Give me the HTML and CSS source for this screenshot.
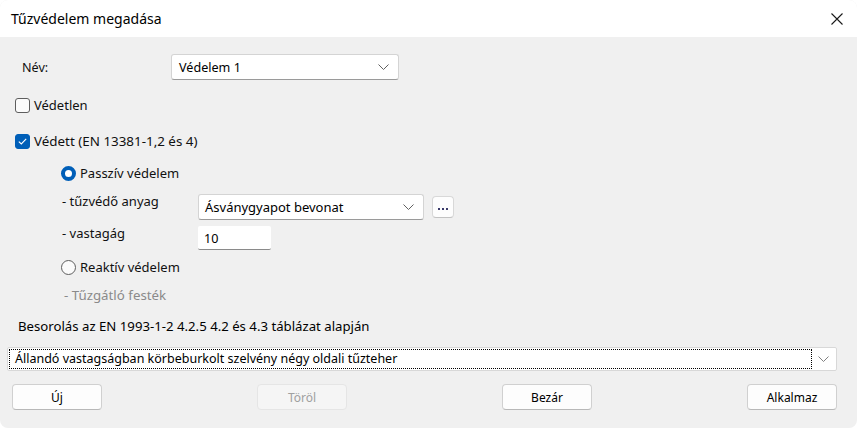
FILE: index.html
```html
<!DOCTYPE html>
<html lang="hu">
<head>
<meta charset="utf-8">
<title>Tűzvédelem megadása</title>
<link rel="stylesheet" href="styles.css">
</head>
<body>
<div class="window">
  <div class="titlebar">
    <span class="title">Tűzvédelem megadása</span>
    <svg class="close" width="12" height="12" viewBox="0 0 12 12"><path d="M0.5 0.5 L11.5 11.5 M11.5 0.5 L0.5 11.5" stroke="#1a1a1a" stroke-width="1.1" fill="none"/></svg>
  </div>
  <div class="content">
    <div class="name-row">
      <span class="name-label">Név:</span>
      <div class="combo combo-name"><span>Védelem 1</span>
        <svg class="chev" width="11" height="6" viewBox="0 0 11 6"><path d="M0.5 0.5 L5.5 5.5 L10.5 0.5" stroke="#606060" stroke-width="1" fill="none"/></svg>
      </div>
    </div>
    <div class="check-row r-unprot">
      <span class="box"></span><span>Védetlen</span>
    </div>
    <div class="check-row r-prot">
      <span class="box checked"><svg width="9" height="7" viewBox="0 0 9 7"><path d="M0.8 3.6 L3.3 6 L8.2 0.8" stroke="#fff" stroke-width="1.1" fill="none"/></svg></span><span class="prot-text">Védett (EN 13381-1,2 és 4)</span>
    </div>
    <div class="sub">
      <div class="radio-row r-pass">
        <span class="radio on"></span><span>Passzív védelem</span>
      </div>
      <div class="field-row r-mat">
        <span class="field-label">- tűzvédő anyag</span>
        <div class="combo combo-mat"><span>Ásványgyapot bevonat</span>
          <svg class="chev" width="11" height="6" viewBox="0 0 11 6"><path d="M0.5 0.5 L5.5 5.5 L10.5 0.5" stroke="#606060" stroke-width="1" fill="none"/></svg>
        </div>
        <div class="dots-btn"><span class="dot"></span><span class="dot"></span><span class="dot"></span></div>
      </div>
      <div class="field-row r-thick">
        <span class="field-label">- vastagág</span>
        <div class="input">10</div>
      </div>
      <div class="radio-row r-react">
        <span class="radio"></span><span>Reaktív védelem</span>
      </div>
      <div class="disabled-label">- Tűzgátló festék</div>
    </div>
    <div class="besorolas">Besorolás az EN 1993-1-2 4.2.5 4.2 és 4.3 táblázat alapján</div>
    <div class="combo combo-wide">
      <span class="focus-text">Állandó vastagságban körbeburkolt szelvény négy oldali tűzteher</span>
      <svg class="chev" width="11" height="6" viewBox="0 0 11 6"><path d="M0.5 0.5 L5.5 5.5 L10.5 0.5" stroke="#808080" stroke-width="1" fill="none"/></svg>
    </div>
    <div class="buttons">
      <div class="btn">Új</div>
      <div class="btn disabled">Töröl</div>
      <div class="btn">Bezár</div>
      <div class="btn">Alkalmaz</div>
    </div>
  </div>
</div>
</body>
</html>
```
FILE: styles.css
```css
* { box-sizing: border-box; }
html, body { margin: 0; padding: 0; background: #ffffff; }
body {
  font-family: "Noto Sans", "Open Sans", sans-serif;
  font-size: 13px;
  color: #111;
  width: 857px;
  height: 428px;
  overflow: hidden;
}
.window {
  width: 857px;
  height: 428px;
  background: #f0f0f0;
  border-radius: 8px;
  overflow: hidden;
  display: flex;
  flex-direction: column;
}
.titlebar {
  height: 37px;
  background: #ffffff;
  display: flex;
  align-items: center;
  padding-left: 11px;
  padding-right: 14px;
  justify-content: space-between;
}
.title { font-size: 14px; color: #000; }
.close { display: block; }
.content {
  padding: 17px 20px 0 7px;
  display: flex;
  flex-direction: column;
}
.name-row {
  display: flex;
  align-items: center;
  height: 26px;
  padding-left: 15px;
  font-size: 12.6px;
}
.name-label { width: 149px; }
.combo {
  background: #fff;
  border: 1px solid #d4d4d4;
  border-bottom-color: #9a9a9a;
  border-radius: 3px;
  display: flex;
  align-items: center;
  justify-content: space-between;
  padding: 0 9px 0 7px;
  color: #000;
}
.combo-name { width: 228px; height: 26px; }
.chev { display: block; flex: none; }
.check-row, .radio-row {
  display: flex;
  align-items: center;
  height: 20px;
  gap: 4px;
}
.check-row { padding-left: 8px; }
.r-unprot { margin-top: 15px; }
.r-prot { margin-top: 16px; }
.prot-text { font-size: 13.4px; }
.box {
  width: 15px;
  height: 15px;
  border: 1px solid #5e5e5e;
  border-radius: 3px;
  background: #fbfbfb;
  display: flex;
  align-items: center;
  justify-content: center;
}
.box.checked { background: #005fb8; border-color: #005fb8; }
.box svg { display: block; }
.sub {
  padding-left: 54px;
  display: flex;
  flex-direction: column;
}
.r-pass { margin-top: 12px; }
.radio {
  width: 15px;
  height: 15px;
  border-radius: 50%;
  border: 1px solid #5e5e5e;
  background: #fbfbfb;
}
.radio.on {
  border: 4px solid #005fb8;
  background: #fff;
}
.field-row {
  display: flex;
  align-items: flex-start;
  padding-left: 1px;
}
.field-label { width: 136px; line-height: 14px; }
.r-mat { margin-top: 11px; }
.combo-mat { width: 226px; height: 26px; padding-left: 6px; }
.dots-btn {
  margin-left: 8px;
  margin-top: 2px;
  width: 22px;
  height: 22px;
  background: #fdfdfd;
  border: 1px solid #d8d8d8;
  border-bottom-color: #c2c2c2;
  border-radius: 4px;
  display: flex;
  align-items: flex-end;
  justify-content: center;
  gap: 2px;
  padding-bottom: 7px;
}
.dot { width: 2px; height: 2px; background: #3a3a6a; }
.r-thick { margin-top: 6px; }
.input {
  width: 73px;
  height: 24px;
  background: #fff;
  border-bottom: 1px solid #8a8a8a;
  border-radius: 2px;
  padding: 4px 0 0 6px;
  color: #000;
  font-size: 12.6px;
}
.r-react { margin-top: 7px; }
.disabled-label {
  margin-top: 8px;
  height: 20px;
  line-height: 20px;
  padding-left: 3px;
  color: #8a8a8a;
  font-size: 13.3px;
}
.besorolas {
  margin-top: 11px;
  height: 20px;
  line-height: 20px;
  padding-left: 11px;
  color: #000;
  font-size: 13.2px;
}
.combo-wide {
  margin-top: 11px;
  width: 830px;
  height: 24px;
  border-color: #d8d8d8;
  border-radius: 2px;
  padding: 0 7px 0 1px;
}
.focus-text {
  flex: 1;
  margin-right: 6px;
  height: 20px;
  line-height: 18px;
  outline: 1px dotted #000;
  outline-offset: -1px;
  padding-left: 5px;
  border: 1px dotted transparent;
  font-size: 12.5px;
}
.buttons {
  margin-top: 13px;
  padding-left: 5px;
  display: flex;
  justify-content: space-between;
}
.btn {
  width: 90px;
  height: 26px;
  background: #fdfdfd;
  border: 1px solid #d0d0d0;
  border-bottom-color: #b8b8b8;
  border-radius: 4px;
  display: flex;
  align-items: center;
  justify-content: center;
  color: #000;
  font-size: 12px;
}
.btn.disabled {
  background: #f5f5f5;
  border-color: #e5e5e5;
  color: #a0a0a0;
}
```
